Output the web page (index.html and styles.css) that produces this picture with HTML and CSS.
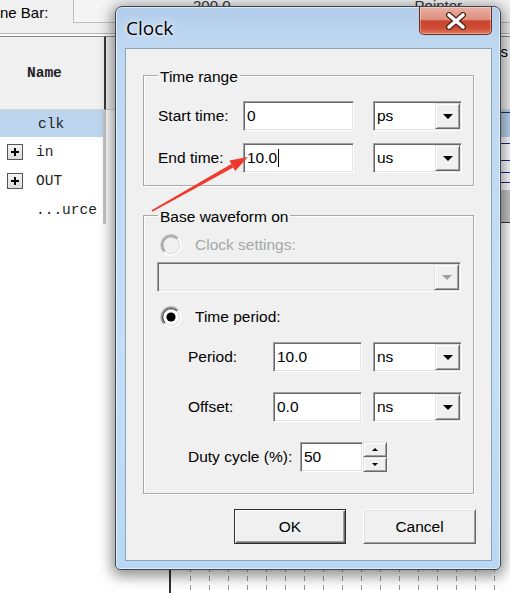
FILE: index.html
```html
<!DOCTYPE html>
<html>
<head>
<meta charset="utf-8">
<link rel="stylesheet" href="styles.css">
</head>
<body>
<div class="screen">
  <div class="toolbar">
    <span class="tb-label">ne Bar:</span>
    <div class="tb-box">
      <span class="tb-val">200.0</span>
      <span class="tb-ptr">Pointer</span>
    </div>
  </div>
  <div class="main">
    <div class="names">
      <div class="names-head">Name</div>
      <div class="name-row sel">clk</div>
      <div class="name-row"><span class="plus"></span>in</div>
      <div class="name-row"><span class="plus"></span>OUT</div>
      <div class="name-row leaf">...urce</div>
    </div>
    <div class="waves">
      <div class="waves-head"><span class="scale">ns</span></div>
      <svg class="wave-canvas" width="404" height="483" viewBox="0 0 404 483">
        <rect x="20" y="0" width="384" height="27" fill="#bcd4ee"/>
        <line x1="20" y1="2.5" x2="404" y2="2.5" stroke="#1e2a6a"/>
        <line x1="20" y1="33.5" x2="404" y2="33.5" stroke="#23238e"/>
        <line x1="20" y1="50.5" x2="404" y2="50.5" stroke="#23238e"/>
        <line x1="20" y1="62.5" x2="404" y2="62.5" stroke="#23238e"/>
        <line x1="20" y1="72.5" x2="404" y2="72.5" stroke="#23238e"/>
        <rect x="20" y="80" width="384" height="32" fill="#c6c6c6"/>
        <line x1="20" y1="112.5" x2="404" y2="112.5" stroke="#333"/>
        <line x1="64" y1="115" x2="64" y2="483" stroke="#333" stroke-width="2"/>
        <g stroke="#9a9a9a" stroke-dasharray="5 4">
          <line x1="84.5" y1="115" x2="84.5" y2="483"/>
          <line x1="103.5" y1="115" x2="103.5" y2="483"/>
          <line x1="122.5" y1="115" x2="122.5" y2="483"/>
          <line x1="141.5" y1="115" x2="141.5" y2="483"/>
          <line x1="160.5" y1="115" x2="160.5" y2="483"/>
          <line x1="179.5" y1="115" x2="179.5" y2="483"/>
          <line x1="198.5" y1="115" x2="198.5" y2="483"/>
          <line x1="217.5" y1="115" x2="217.5" y2="483"/>
          <line x1="236.5" y1="115" x2="236.5" y2="483"/>
          <line x1="255.5" y1="115" x2="255.5" y2="483"/>
          <line x1="274.5" y1="115" x2="274.5" y2="483"/>
          <line x1="293.5" y1="115" x2="293.5" y2="483"/>
          <line x1="312.5" y1="115" x2="312.5" y2="483"/>
          <line x1="331.5" y1="115" x2="331.5" y2="483"/>
          <line x1="350.5" y1="115" x2="350.5" y2="483"/>
          <line x1="369.5" y1="115" x2="369.5" y2="483"/>
          <line x1="388.5" y1="115" x2="388.5" y2="483"/>
        </g>
      </svg>
    </div>
  </div>

  <div class="dialog">
    <div class="titlebar">
      <span class="title">Clock</span>
      <div class="close">
        <svg width="22" height="18" viewBox="0 0 22 18">
          <path d="M4 3 L18 15 M18 3 L4 15" stroke="#4a2218" stroke-width="6" stroke-linecap="round" fill="none"/>
          <path d="M4 3 L18 15 M18 3 L4 15" stroke="#ffffff" stroke-width="3.6" stroke-linecap="round" fill="none"/>
        </svg>
      </div>
    </div>
    <div class="client">
      <div class="group g-time">
        <span class="legend">Time range</span>
        <div class="frow">
          <span class="lbl l85">Start time:</span>
          <div class="edit w111">0</div>
          <div class="combo m19"><span class="cval">ps</span><span class="dd"><i class="tri"></i></span></div>
        </div>
        <div class="frow gap12">
          <span class="lbl l85">End time:</span>
          <div class="edit w111">10.0<span class="caret"></span></div>
          <div class="combo m19"><span class="cval">us</span><span class="dd"><i class="tri"></i></span></div>
        </div>
      </div>

      <div class="group g-base">
        <span class="legend">Base waveform on</span>
        <div class="radio-row dis">
          <svg class="radio" width="22" height="22" viewBox="0 0 22 22">
            <circle cx="11" cy="11" r="8.5" fill="#f0f0f0"/>
            <path d="M3.93 18.07 A10 10 0 0 1 18.07 3.93" fill="none" stroke="#b4b4b4" stroke-width="1.5"/>
            <path d="M18.07 3.93 A10 10 0 0 1 3.93 18.07" fill="none" stroke="#ffffff" stroke-width="1.5"/>
            <path d="M4.99 17.01 A8.5 8.5 0 0 1 17.01 4.99" fill="none" stroke="#a0a0a0" stroke-width="1.5"/>
            <path d="M17.01 4.99 A8.5 8.5 0 0 1 4.99 17.01" fill="none" stroke="#e3e3e3" stroke-width="1.5"/>
          </svg>
          <span>Clock settings:</span>
        </div>
        <div class="combo wide dis"><span class="cval"></span><span class="dd"><i class="tri"></i></span></div>
        <div class="radio-row mt14">
          <svg class="radio" width="22" height="22" viewBox="0 0 22 22">
            <circle cx="11" cy="11" r="8.5" fill="#ffffff"/>
            <path d="M3.93 18.07 A10 10 0 0 1 18.07 3.93" fill="none" stroke="#a0a0a0" stroke-width="1.5"/>
            <path d="M18.07 3.93 A10 10 0 0 1 3.93 18.07" fill="none" stroke="#ffffff" stroke-width="1.5"/>
            <path d="M4.99 17.01 A8.5 8.5 0 0 1 17.01 4.99" fill="none" stroke="#595959" stroke-width="1.5"/>
            <path d="M17.01 4.99 A8.5 8.5 0 0 1 4.99 17.01" fill="none" stroke="#e3e3e3" stroke-width="1.5"/>
            <circle cx="11" cy="11" r="4.6" fill="#000"/>
          </svg>
          <span>Time period:</span>
        </div>
        <div class="frow sub mt14">
          <span class="lbl l85">Period:</span>
          <div class="edit w89">10.0</div>
          <div class="combo m11"><span class="cval">ns</span><span class="dd"><i class="tri"></i></span></div>
        </div>
        <div class="frow sub mt20">
          <span class="lbl l85">Offset:</span>
          <div class="edit w89">0.0</div>
          <div class="combo m11"><span class="cval">ns</span><span class="dd"><i class="tri"></i></span></div>
        </div>
        <div class="frow sub mt20">
          <span class="lbl l112">Duty cycle (%):</span>
          <div class="edit w63">50</div>
          <div class="spin">
            <span class="spin-btn"><i class="tri-up"></i></span>
            <span class="spin-btn"><i class="tri-sm"></i></span>
          </div>
        </div>
      </div>

      <div class="buttons">
        <button class="btn def">OK</button>
        <button class="btn cancel">Cancel</button>
      </div>
    </div>
  </div>

  <svg class="arrow" width="510" height="593" viewBox="0 0 510 593">
    <polygon points="151.6,210.3 231.3,164.0 233.3,167.6 152.4,211.7" fill="#ee3a2e"/>
    <polygon points="248,157 235.2,171.0 229.4,160.6" fill="#ee3a2e"/>
  </svg>
</div>
</body>
</html>
```
FILE: styles.css
```css
body {
  margin: 0;
  width: 510px;
  height: 593px;
  overflow: hidden;
  background: #fff;
  font-family: "Liberation Sans", Arial, sans-serif;
}

.screen {
  position: relative;
  width: 510px;
  height: 593px;
  overflow: hidden;
}

/* ---------- background application ---------- */
.toolbar {
  display: flex;
  height: 33px;
  background: #f0f0f0;
  border-bottom: 1px solid #b4b4b4;
}
.tb-label {
  width: 73px;
  font-size: 15px;
  line-height: 26px;
  white-space: nowrap;
  color: #000;
}
.tb-box {
  flex: 1;
  display: flex;
  align-items: flex-start;
  height: 23px;
  box-sizing: border-box;
  border-left: 1px solid #bdbdbd;
  border-bottom: 1px solid #bdbdbd;
  background: #f4f4f4;
}
.tb-val {
  margin-left: 119px;
  margin-top: -3px;
  font-size: 15px;
  line-height: 18px;
  color: #333;
}
.tb-ptr {
  margin-left: 184px;
  margin-top: -3px;
  font-size: 15px;
  line-height: 18px;
  color: #333;
}

.main {
  display: flex;
}
.names {
  width: 106px;
  flex: none;
}
.names-head {
  margin-top: 2px;
  height: 74px;
  box-sizing: border-box;
  border-top: 1px solid #8a8a8a;
  border-bottom: 1px solid #d6d6d6;
  border-right: 2px solid #3c3c3c;
  background: #f0f0f0;
  font: bold 14.5px "Liberation Mono", monospace;
  line-height: 72px;
  padding-left: 27px;
  color: #222;
}
.name-row {
  height: 29px;
  box-sizing: border-box;
  display: flex;
  align-items: center;
  padding-left: 7px;
  border-right: 3px solid #c6c6c6;
  font: 14.5px "Liberation Mono", monospace;
  color: #1e1e1e;
}
.name-row.sel {
  height: 27px;
  background: #bcd4ee;
  padding-left: 38px;
}
.name-row.leaf {
  padding-left: 36px;
}
.plus {
  position: relative;
  width: 16px;
  height: 16px;
  box-sizing: border-box;
  border: 1px solid #555;
  background: linear-gradient(#f4f4f4, #dcdcdc);
  margin-right: 13px;
}
.plus::before {
  content: "";
  position: absolute;
  left: 3px;
  top: 6px;
  width: 8px;
  height: 2px;
  background: #000;
}
.plus::after {
  content: "";
  position: absolute;
  left: 6px;
  top: 3px;
  width: 2px;
  height: 8px;
  background: #000;
}

.waves {
  flex: 1;
}
.waves-head {
  margin-top: 2px;
  height: 74px;
  box-sizing: border-box;
  border-top: 1px solid #8a8a8a;
  border-bottom: 1px solid #d6d6d6;
  background: #f0f0f0;
  display: flex;
  justify-content: flex-end;
  align-items: flex-start;
  padding: 6px 2px 0 0;
}
.scale {
  font-size: 15px;
  line-height: 18px;
}
.wave-canvas {
  display: block;
}

/* ---------- dialog ---------- */
.dialog {
  position: absolute;
  left: 115px;
  top: 6px;
  width: 386px;
  height: 564px;
  box-sizing: border-box;
  border: 1px solid #3d4650;
  border-radius: 7px 7px 5px 5px;
  background: linear-gradient(180deg, #b2cdea 0px, #bfd8f1 40px, #c4def7 60%, #b9d7f4 100%);
  box-shadow: 0 3px 14px 3px rgba(0, 0, 0, 0.45), inset 0 0 0 1px rgba(255, 255, 255, 0.55);
  display: flex;
  flex-direction: column;
  padding: 0 8px 8px 9px;
  font-size: 15.5px;
  color: #000;
}
.titlebar {
  height: 41px;
  flex: none;
  display: flex;
  align-items: flex-start;
  justify-content: space-between;
}
.title {
  margin-top: 9px;
  margin-left: 1px;
  font-family: "Open Sans", "Noto Sans", sans-serif;
  font-size: 19px;
  line-height: 24px;
  color: #000;
  text-shadow: 0 0 8px rgba(255, 255, 255, 0.9), 0 0 3px rgba(255, 255, 255, 0.8);
}
.close {
  width: 73px;
  height: 28px;
  box-sizing: border-box;
  border: 1px solid #6e2b22;
  border-top: none;
  border-radius: 0 0 5px 5px;
  background: linear-gradient(180deg, #eab0a2 0%, #dd907e 46%, #c9432d 52%, #cf4b34 78%, #e27a5c 100%);
  box-shadow: inset 0 0 0 1px rgba(255, 255, 255, 0.35);
  display: flex;
  align-items: center;
  justify-content: center;
}
.close svg {
  display: block;
}

.client {
  height: 513px;
  flex: none;
  box-sizing: border-box;
  border: 1px solid #8fa3b8;
  background: #f0f0f0;
  display: flex;
  flex-direction: column;
}

.group {
  position: relative;
  margin-left: 17px;
  width: 331px;
  box-sizing: border-box;
  border: 1px solid #a8a8a8;
  box-shadow: inset 1px 1px 0 #fff, 1px 1px 0 #fff;
}
.g-time {
  margin-top: 26px;
  height: 111px;
  padding: 25px 0 0 14px;
}
.g-base {
  margin-top: 29px;
  height: 279px;
  padding: 18px 0 0 0;
}
.legend {
  position: absolute;
  left: 14px;
  top: -8px;
  padding: 0 2px;
  line-height: 18px;
  background: #f0f0f0;
  white-space: nowrap;
}

.frow {
  display: flex;
  align-items: center;
  height: 30px;
}
.frow.sub {
  padding-left: 44px;
}
.gap12 { margin-top: 12px; }
.mt14 { margin-top: 14px; }
.mt20 { margin-top: 20px; }

.lbl {
  flex: none;
  white-space: nowrap;
}
.l85 { width: 85px; }
.l112 { width: 112px; }

.edit {
  height: 30px;
  box-sizing: border-box;
  border: 1px solid;
  border-color: #a0a0a0 #fff #fff #a0a0a0;
  box-shadow: inset 1px 1px 0 #696969, inset -1px -1px 0 #e3e3e3;
  background: #fff;
  padding: 0 3px;
  display: flex;
  align-items: center;
  white-space: nowrap;
}
.w111 { width: 111px; }
.w89 { width: 89px; }
.w63 { width: 63px; }
.caret {
  display: inline-block;
  width: 1px;
  height: 18px;
  background: #000;
  margin-left: 1px;
}

.combo {
  width: 89px;
  height: 30px;
  box-sizing: border-box;
  display: flex;
  border: 1px solid;
  border-color: #a0a0a0 #fff #fff #a0a0a0;
  box-shadow: inset 1px 1px 0 #696969, inset -1px -1px 0 #e3e3e3;
  background: #fff;
  padding: 1px;
}
.m19 { margin-left: 19px; }
.m11 { margin-left: 11px; }
.combo.wide {
  width: 304px;
  margin-left: 13px;
  margin-top: 6px;
}
.combo.dis {
  background: #f0f0f0;
}
.cval {
  flex: 1;
  padding-left: 2px;
  display: flex;
  align-items: center;
}
.dd {
  width: 25px;
  box-sizing: border-box;
  border: 1px solid;
  border-color: #e3e3e3 #696969 #696969 #e3e3e3;
  box-shadow: inset 1px 1px 0 #fff, inset -1px -1px 0 #a0a0a0;
  background: #f0f0f0;
  display: flex;
  align-items: center;
  justify-content: center;
}
.tri {
  width: 0;
  height: 0;
  border-left: 5px solid transparent;
  border-right: 5px solid transparent;
  border-top: 5px solid #000;
}
.dis .tri {
  border-top-color: #a0a0a0;
}

.spin {
  width: 24px;
  height: 30px;
  display: flex;
  flex-direction: column;
}
.spin-btn {
  flex: 1;
  box-sizing: border-box;
  border: 1px solid;
  border-color: #e3e3e3 #696969 #696969 #e3e3e3;
  box-shadow: inset 1px 1px 0 #fff, inset -1px -1px 0 #a0a0a0;
  background: #f0f0f0;
  display: flex;
  align-items: center;
  justify-content: center;
}
.tri-up {
  width: 0;
  height: 0;
  border-left: 3px solid transparent;
  border-right: 3px solid transparent;
  border-bottom: 3px solid #000;
}
.tri-sm {
  width: 0;
  height: 0;
  border-left: 3px solid transparent;
  border-right: 3px solid transparent;
  border-top: 3px solid #000;
}

.radio-row {
  height: 22px;
  display: flex;
  align-items: center;
  padding-left: 16px;
  gap: 13px;
  white-space: nowrap;
}
.radio {
  display: block;
  flex: none;
}
.radio-row.dis span {
  color: #a7a7a7;
}

.buttons {
  margin-top: 15px;
  display: flex;
  padding-left: 108px;
  gap: 17px;
}
.btn {
  height: 35px;
  box-sizing: border-box;
  background: #f0f0f0;
  font-family: "Liberation Sans", Arial, sans-serif;
  font-size: 15.5px;
  color: #000;
  padding: 0;
  margin: 0;
}
.btn.def {
  width: 112px;
  border: 1px solid #2e2e2e;
  box-shadow: inset 1px 1px 0 #fff, inset -1px -1px 0 #696969, inset -2px -2px 0 #a0a0a0;
}
.btn.cancel {
  width: 113px;
  border: 1px solid;
  border-color: #fff #696969 #696969 #fff;
  box-shadow: inset 1px 1px 0 #e3e3e3, inset -1px -1px 0 #a0a0a0;
}

.arrow {
  position: absolute;
  left: 0;
  top: 0;
  pointer-events: none;
}
```
